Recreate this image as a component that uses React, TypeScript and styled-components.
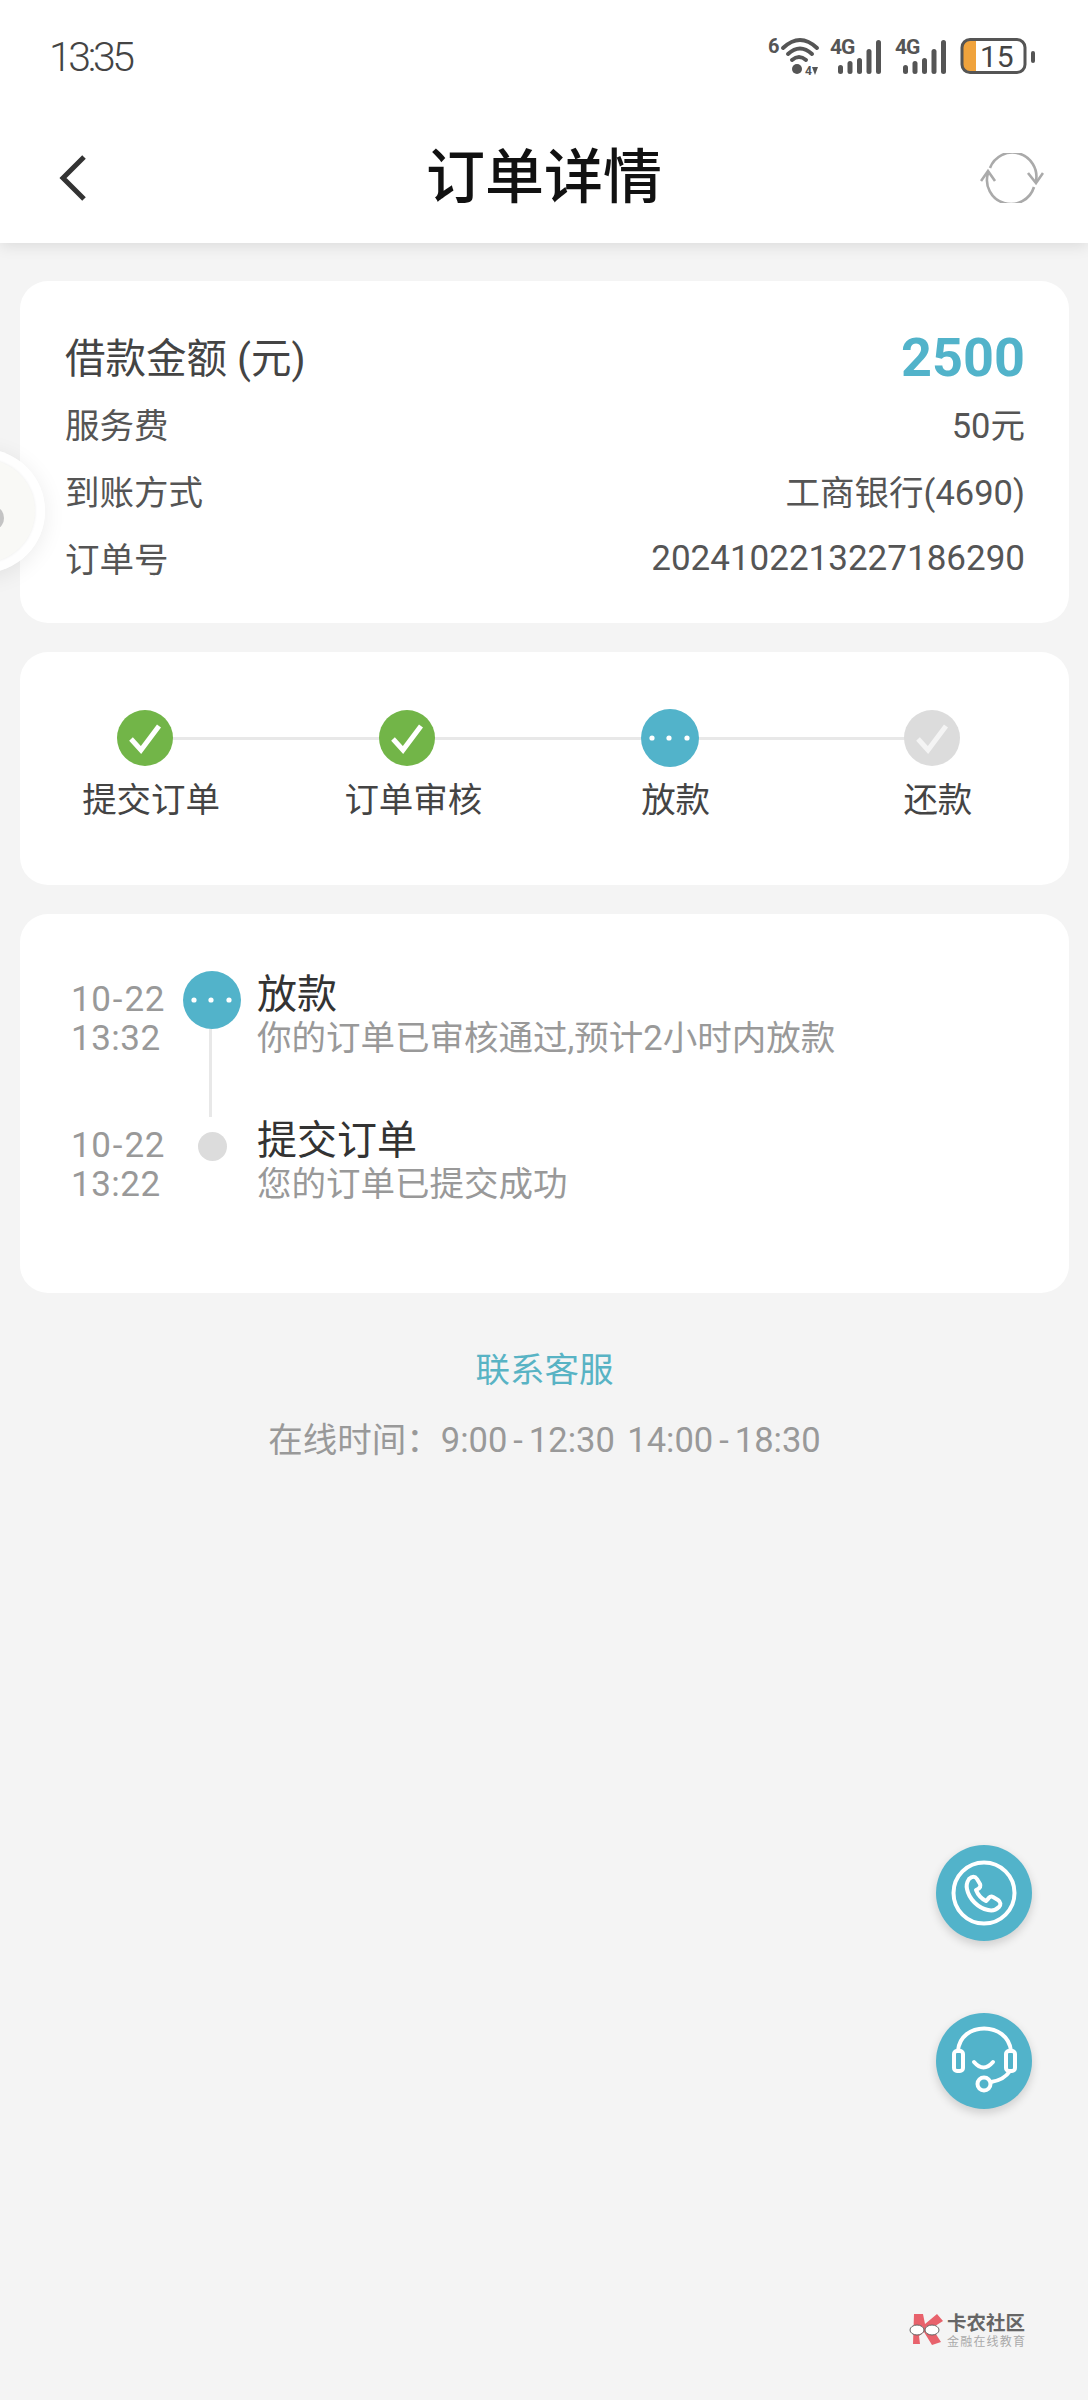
import React from 'react';
import styled, { createGlobalStyle } from 'styled-components';

const ACCENT = '#52b3ca';
const GREEN = '#72b548';
const GREY = '#dcdcdc';

const GlobalStyle = createGlobalStyle`
	html, body {
		margin: 0;
		padding: 0;
		background: #f3f3f3;
	}
	* {
		box-sizing: border-box;
	}
`;

const Page = styled.div`
	position: relative;
	width: 1088px;
	height: 2400px;
	overflow: hidden;
	background: #f4f4f4;
	font-family: Roboto, "Noto Sans CJK SC", sans-serif;
	color: #555;
`;

const Header = styled.header`
	background: #fff;
	box-shadow: 0 3px 14px rgba(0, 0, 0, 0.1);
`;

const StatusBar = styled.div`
	display: flex;
	align-items: center;
	justify-content: space-between;
	height: 113px;
	padding: 0 52px 0 49px;
`;

const Clock = styled.span`
	font-size: 41px;
	font-weight: 300;
	letter-spacing: -3.4px;
	color: #444;
`;

const NavBar = styled.nav`
	display: grid;
	grid-template-columns: 1fr auto 1fr;
	align-items: center;
	height: 130px;
	padding: 0 44px;
`;

const NavTitle = styled.h1`
	margin: 0;
	font-size: 59px;
	line-height: 70px;
	font-weight: 500;
	color: #111;
`;

const NavEnd = styled.div<{ $right?: boolean }>`
	display: flex;
	justify-content: ${(p) => (p.$right ? 'flex-end' : 'flex-start')};
	padding-left: ${(p) => (p.$right ? 0 : 15)}px;
`;

const Content = styled.main`
	display: flex;
	flex-direction: column;
	gap: 29px;
	padding: 38px 19px 0 20px;
`;

const Card = styled.section`
	background: #fff;
	border-radius: 28px;
`;

const InfoCard = styled(Card)`
	padding: 41px 44px 33px 45px;
`;

const InfoRow = styled.div`
	display: flex;
	align-items: center;
	justify-content: space-between;
	height: 67px;
	font-size: 34.5px;
`;

const AmountLabel = styled.span`
	font-size: 40.5px;
	color: #444;
`;

const Amount = styled.span`
	padding-top: 3px;
	font-size: 54px;
	font-weight: 700;
	color: ${ACCENT};
`;

const Digits = styled.span`
	padding-top: 4px;
	font-size: 35px;
`;

const StepsCard = styled(Card)`
	display: grid;
	grid-template-columns: repeat(4, 1fr);
	height: 233px;
	padding-top: 58px;
`;

const Step = styled.div<{ $last?: boolean }>`
	position: relative;
	display: flex;
	flex-direction: column;
	align-items: center;

	&::after {
		content: '';
		display: ${(p) => (p.$last ? 'none' : 'block')};
		position: absolute;
		top: 27px;
		left: calc(50% - 6px);
		width: 100%;
		height: 3px;
		background: #e8e8e8;
	}
`;

const StepSlot = styled.div`
	position: relative;
	z-index: 1;
	display: flex;
	align-items: center;
	justify-content: center;
	height: 56px;
	margin-right: 12px;
`;

const Dot = styled.div<{ $color: string; $size: number }>`
	display: flex;
	flex: none;
	align-items: center;
	justify-content: center;
	width: ${(p) => p.$size}px;
	height: ${(p) => p.$size}px;
	border-radius: 50%;
	background: ${(p) => p.$color};
`;

const StepLabel = styled.span`
	margin-top: 14px;
	font-size: 34.5px;
	line-height: 40px;
	color: #444;
`;

const TimelineCard = styled(Card)`
	height: 379px;
	padding: 57px 0 0 51px;
`;

const TimelineRow = styled.div`
	display: flex;
	height: 146px;
`;

const TimeCol = styled.div`
	flex: none;
	width: 112px;
	padding-top: 9px;
	font-size: 35px;
	line-height: 39px;
	color: #999;
	letter-spacing: 0.5px;
`;

const Hyphen = styled.span<{ $pad: number }>`
	padding: 0 ${(p) => p.$pad}px;
`;

const Axis = styled.div`
	display: flex;
	flex: none;
	flex-direction: column;
	align-items: center;
	width: 58px;
	height: 100%;
`;

const AxisSlot = styled.div`
	display: flex;
	flex: none;
	align-items: center;
	justify-content: center;
	height: 58px;
`;

const AxisLine = styled.div`
	flex: 1;
	width: 3px;
	margin-right: 4px;
	background: #e8e8e8;
`;

const TextCol = styled.div`
	margin-left: 16px;
	padding-top: 2px;
`;

const EventTitle = styled.div`
	font-size: 40px;
	line-height: 44px;
	color: #333;
`;

const EventNote = styled.div`
	font-size: 34.5px;
	line-height: 42px;
	color: #999;
`;

const Footer = styled.div`
	display: flex;
	flex-direction: column;
	align-items: center;
	margin-top: 57px;
	margin-left: 1px;
	gap: 30px;
`;

const ContactLink = styled.a`
	font-size: 34.5px;
	line-height: 40px;
	color: #58b3c4;
`;

const OnlineTime = styled.span`
	font-size: 34.5px;
	line-height: 40px;
	word-spacing: 4px;
	color: #999;
`;

const Fab = styled.button<{ $top: number }>`
	position: absolute;
	top: ${(p) => p.$top}px;
	left: 936px;
	width: 96px;
	height: 96px;
	padding: 0;
	border: none;
	border-radius: 50%;
	background: ${ACCENT};
	box-shadow: 0 4px 10px rgba(0, 0, 0, 0.16);
`;

const FloatBall = styled.div`
	position: absolute;
	top: 449px;
	left: -79px;
	width: 124px;
	height: 124px;
	border-radius: 50%;
	background: rgba(255, 255, 255, 0.9);
	box-shadow: 0 4px 22px rgba(0, 0, 0, 0.08);

	&::before {
		content: '';
		position: absolute;
		inset: 10px;
		border-radius: 50%;
		background: #f9f9f6;
		box-shadow: 0 0 3px rgba(0, 0, 0, 0.08);
	}

	&::after {
		content: '';
		position: absolute;
		top: 59px;
		right: 41px;
		width: 14px;
		height: 20px;
		border-radius: 50%;
		background: #c4c4c4;
	}
`;

const Watermark = styled.div`
	position: absolute;
	top: 2313px;
	left: 908px;
	display: flex;
	gap: 2px;
`;

const MarkText = styled.div`
	display: flex;
	flex-direction: column;
`;

const MarkName = styled.span`
	font-size: 19.5px;
	line-height: 22px;
	font-weight: 700;
	color: #666;
`;

const MarkSub = styled.span`
	font-size: 12px;
	line-height: 14px;
	letter-spacing: 1.2px;
	color: #aaa;
`;

const BAR_TOPS = [64, 60, 57, 48, 39];

const StatusIcons = () => (
	<svg width="270" height="60" viewBox="765 26 270 60" style={{ display: 'block' }}>
		<g fill="#555" fontFamily="Roboto, sans-serif">
			<text x="767" y="52" fontSize="20" fontWeight="700">6</text>
			<text x="804" y="74" fontSize="12" fontWeight="700">4</text>
			<path d="M811 66 L817 66 L814 74 Z" />
			<text x="829" y="53" fontSize="21" fontWeight="700" letterSpacing="-1">4G</text>
			<text x="894" y="53" fontSize="21" fontWeight="700" letterSpacing="-1">4G</text>
			<circle cx="796" cy="68" r="5" />
			{[837, 846.5, 856, 865.5, 875, 902, 911.5, 921, 930.5, 940].map((x, i) => (
				<rect key={x} x={x} y={BAR_TOPS[i % 5]} width="5" height={73 - BAR_TOPS[i % 5]} rx="2.5" />
			))}
			<rect x="1030" y="50" width="4" height="12" rx="2" />
		</g>
		<g fill="none" stroke="#555" strokeWidth="4" strokeLinecap="round">
			<path d="M782 47 Q799 31 816 47" />
			<path d="M787 53 Q799 42 811 53" />
			<path d="M791 59 Q798 53 805 59" />
		</g>
		<path d="M975 38.5 h-7 a7 7 0 0 0 -7 7 v19 a7 7 0 0 0 7 7 h7 Z" fill="#f0a33c" />
		<rect x="961" y="38.5" width="63" height="33" rx="8" fill="none" stroke="#555" strokeWidth="3" />
		<text x="979" y="66" fontSize="30" fontFamily="Roboto, sans-serif" fill="#444">15</text>
	</svg>
);

const BackIcon = () => (
	<svg width="28" height="46" viewBox="0 0 28 46" style={{ display: 'block' }}>
		<path d="M25 2 L4 23 L25 44" fill="none" stroke="#333" strokeWidth="5" />
	</svg>
);

const RefreshIcon = () => (
	<svg width="64" height="50" viewBox="0 0 64 50" style={{ display: 'block' }}>
		<g fill="none" stroke="#aaa" strokeWidth="2.6">
			<path d="M10 15 A24 24 0 0 1 56 28" />
			<path d="M54 34 A24 24 0 0 1 8 20" />
			<path d="M48 20 L56 30 L63 20" />
			<path d="M1 28 L8 18 L15 28" />
		</g>
	</svg>
);

const CheckIcon = ({ color = '#fff' }: { color?: string }) => (
	<svg width="38" height="38" viewBox="0 0 38 38">
		<path d="M5 20 L15 31 L33 7" fill="none" stroke={color} strokeWidth="5" />
	</svg>
);

const DotsIcon = () => (
	<svg width="44" height="8" viewBox="0 0 44 8">
		<circle cx="4" cy="4" r="2.6" fill="#fff" />
		<circle cx="21" cy="4" r="2.6" fill="#fff" />
		<circle cx="39" cy="4" r="2.6" fill="#fff" />
	</svg>
);

const PhoneIcon = () => (
	<svg width="96" height="96" viewBox="0 0 96 96">
		<g fill="none" stroke="#fff" strokeWidth="4" strokeLinejoin="round">
			<circle cx="48" cy="48" r="30.5" />
			<path d="M33 34 c3 -3 6 -3 8 0 l3 5 c1 2 0 4 -2 5 l-2 1 c2 5 6 9 10 11 l2 -2 c1 -2 3 -3 5 -2 l5 3 c3 2 3 5 1 7 c-3 3 -7 4 -11 3 C42 63 33 54 31 44 c-1 -4 0 -7 2 -10 z" />
		</g>
	</svg>
);

const HeadsetIcon = () => (
	<svg width="96" height="96" viewBox="0 0 96 96">
		<g fill="none" stroke="#fff" strokeWidth="4" strokeLinecap="round" strokeLinejoin="round">
			<path d="M22 38 C24 8 72 8 75 38" />
			<rect x="18" y="38" width="9" height="20" rx="3" />
			<rect x="70" y="38" width="9" height="20" rx="3" />
			<path d="M38 49 q9.5 11 19 0" />
			<path d="M55 69 Q68 67 74 58" />
			<circle cx="48" cy="71" r="6.5" />
		</g>
	</svg>
);

const MarkLogo = () => (
	<svg width="37" height="33" viewBox="0 0 37 33">
		<path d="M6 1 H15 L17 11 L29 1 L35 8 L24 15 L33 29 L24 32 L16 19 L11 23 L12 31 H5 Z" fill="#e8626c" />
		<g fill="#fff" stroke="#666" strokeWidth="1">
			<ellipse cx="9" cy="17" rx="7" ry="5" />
			<ellipse cx="24" cy="17" rx="7" ry="5" />
		</g>
	</svg>
);

const STEPS = [
	{ label: '提交订单', state: 'done' },
	{ label: '订单审核', state: 'done' },
	{ label: '放款', state: 'active' },
	{ label: '还款', state: 'todo' },
];

const App = () => (
	<Page>
		<GlobalStyle />
		<Header>
			<StatusBar>
				<Clock>13:35</Clock>
				<StatusIcons />
			</StatusBar>
			<NavBar>
				<NavEnd><BackIcon /></NavEnd>
				<NavTitle>订单详情</NavTitle>
				<NavEnd $right><RefreshIcon /></NavEnd>
			</NavBar>
		</Header>
		<Content>
			<InfoCard>
				<InfoRow>
					<AmountLabel>借款金额 (元)</AmountLabel>
					<Amount>2500</Amount>
				</InfoRow>
				<InfoRow>
					<span>服务费</span>
					<span>50元</span>
				</InfoRow>
				<InfoRow>
					<span>到账方式</span>
					<span>工商银行(4690)</span>
				</InfoRow>
				<InfoRow>
					<span>订单号</span>
					<Digits>2024102213227186290</Digits>
				</InfoRow>
			</InfoCard>
			<StepsCard>
				{STEPS.map((step, index) => (
					<Step key={step.label} $last={index === STEPS.length - 1}>
						<StepSlot>
							{step.state === 'active' ? (
								<Dot $color={ACCENT} $size={58}><DotsIcon /></Dot>
							) : (
								<Dot $color={step.state === 'done' ? GREEN : GREY} $size={56}>
									<CheckIcon color={step.state === 'done' ? '#fff' : '#f4f4f4'} />
								</Dot>
							)}
						</StepSlot>
						<StepLabel>{step.label}</StepLabel>
					</Step>
				))}
			</StepsCard>
			<TimelineCard>
				<TimelineRow>
					<TimeCol>10<Hyphen $pad={1.5}>-</Hyphen>22<br />13:32</TimeCol>
					<Axis>
						<AxisSlot>
							<Dot $color={ACCENT} $size={58}><DotsIcon /></Dot>
						</AxisSlot>
						<AxisLine />
					</Axis>
					<TextCol>
						<EventTitle>放款</EventTitle>
						<EventNote>你的订单已审核通过,预计2小时内放款</EventNote>
					</TextCol>
				</TimelineRow>
				<TimelineRow>
					<TimeCol>10<Hyphen $pad={1.5}>-</Hyphen>22<br />13:22</TimeCol>
					<Axis>
						<AxisSlot>
							<Dot $color={GREY} $size={29} />
						</AxisSlot>
					</Axis>
					<TextCol>
						<EventTitle>提交订单</EventTitle>
						<EventNote>您的订单已提交成功</EventNote>
					</TextCol>
				</TimelineRow>
			</TimelineCard>
		</Content>
		<Footer>
			<ContactLink>联系客服</ContactLink>
			<OnlineTime>在线时间：9:00<Hyphen $pad={6}>-</Hyphen>12:30 14:00<Hyphen $pad={6}>-</Hyphen>18:30</OnlineTime>
		</Footer>
		<FloatBall />
		<Fab $top={1845}><PhoneIcon /></Fab>
		<Fab $top={2013}><HeadsetIcon /></Fab>
		<Watermark>
			<MarkLogo />
			<MarkText>
				<MarkName>卡农社区</MarkName>
				<MarkSub>金融在线教育</MarkSub>
			</MarkText>
		</Watermark>
	</Page>
);

export default App;
